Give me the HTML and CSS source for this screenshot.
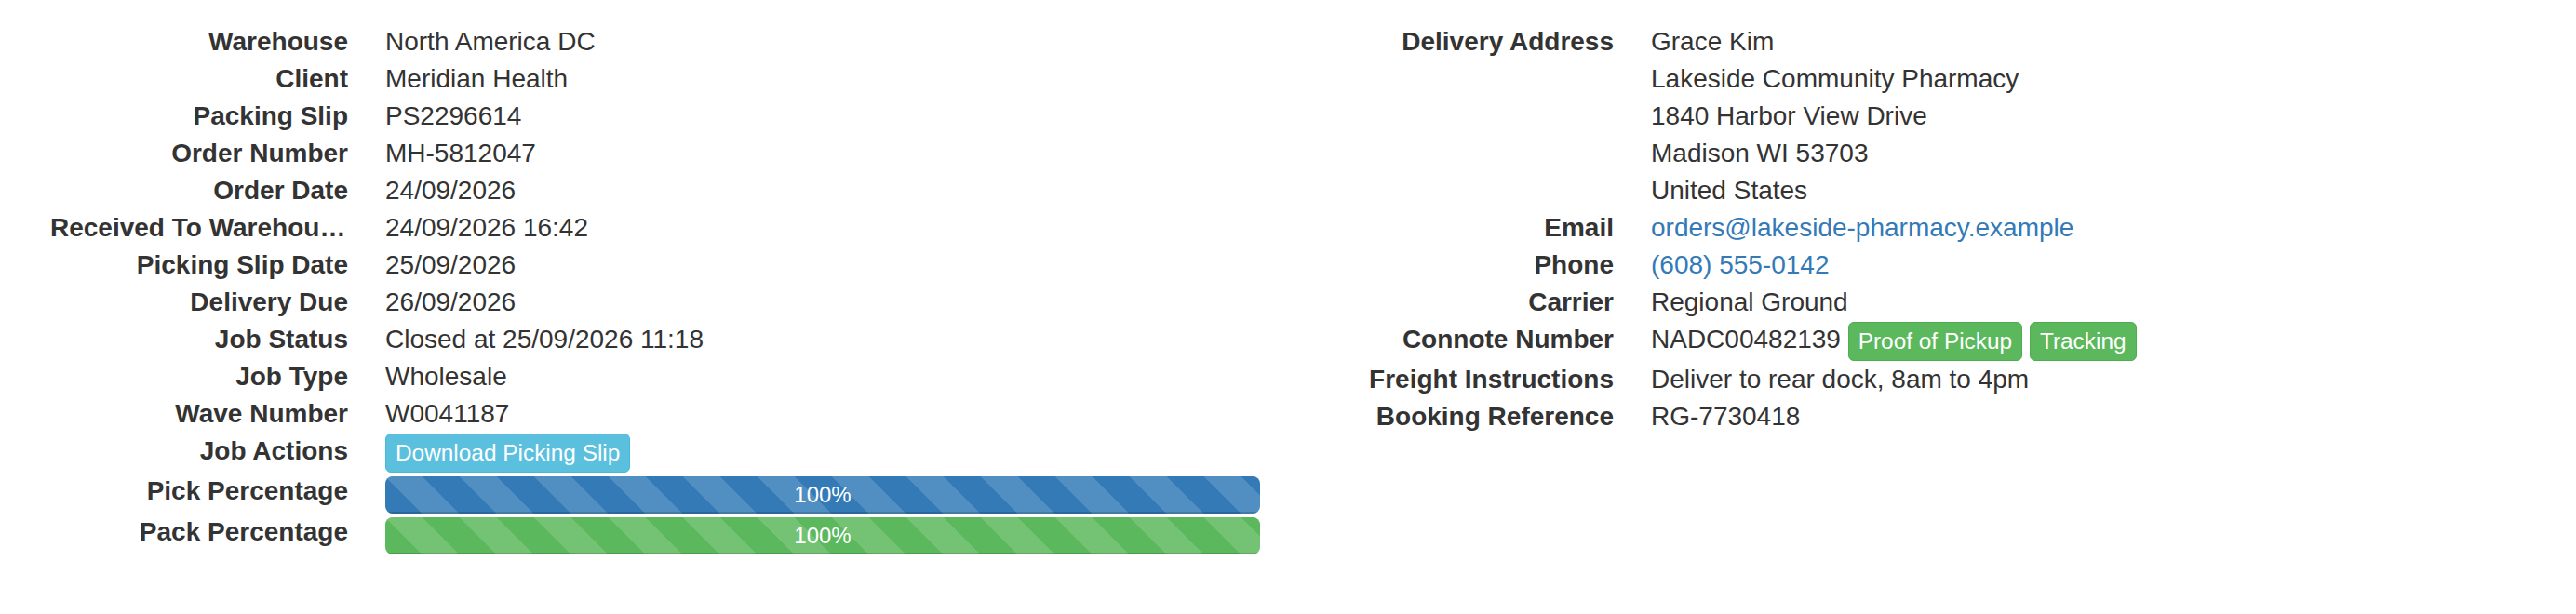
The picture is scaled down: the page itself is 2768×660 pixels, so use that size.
FILE: index.html
```html
<!DOCTYPE html>
<html lang="en">
<head>
<meta charset="utf-8">
<title>Job Details</title>
<link rel="stylesheet" href="styles.css">
</head>
<body>
<div class="page">
  <div class="col">
    <dl class="details">
      <dt>Warehouse</dt><dd>North America DC</dd>
      <dt>Client</dt><dd>Meridian Health</dd>
      <dt>Packing Slip</dt><dd>PS2296614</dd>
      <dt>Order Number</dt><dd>MH-5812047</dd>
      <dt>Order Date</dt><dd>24/09/2026</dd>
      <dt>Received To Warehouse Date</dt><dd>24/09/2026 16:42</dd>
      <dt>Picking Slip Date</dt><dd>25/09/2026</dd>
      <dt>Delivery Due</dt><dd>26/09/2026</dd>
      <dt>Job Status</dt><dd>Closed at 25/09/2026 11:18</dd>
      <dt>Job Type</dt><dd>Wholesale</dd>
      <dt>Wave Number</dt><dd>W0041187</dd>
      <dt>Job Actions</dt><dd><a class="btn btn-info" href="#">Download Picking Slip</a></dd>
      <dt>Pick Percentage</dt><dd><div class="progress"><div class="progress-bar bar-primary striped" style="width:100%">100%</div></div></dd>
      <dt>Pack Percentage</dt><dd><div class="progress"><div class="progress-bar bar-success striped" style="width:100%">100%</div></div></dd>
    </dl>
  </div>
  <div class="col">
    <dl class="details">
      <dt>Delivery Address</dt><dd>Grace Kim<br>Lakeside Community Pharmacy<br>1840 Harbor View Drive<br>Madison WI 53703<br>United States</dd>
      <dt>Email</dt><dd><a class="link" href="#">orders@lakeside-pharmacy.example</a></dd>
      <dt>Phone</dt><dd><a class="link" href="#">(608) 555-0142</a></dd>
      <dt>Carrier</dt><dd>Regional Ground</dd>
      <dt>Connote Number</dt><dd>NADC00482139 <a class="btn btn-success" href="#">Proof of Pickup</a> <a class="btn btn-success" href="#">Tracking</a></dd>
      <dt>Freight Instructions</dt><dd>Deliver to rear dock, 8am to 4pm</dd>
      <dt>Booking Reference</dt><dd>RG-7730418</dd>
    </dl>
  </div>
</div>
</body>
</html>
```

FILE: styles.css
```css
* { box-sizing: border-box; }
body {
  margin: 0;
  background: #fff;
  color: #333;
  font-family: "Liberation Sans", Arial, sans-serif;
  font-size: 28px;
  line-height: 40px;
}
.page {
  display: flex;
  padding: 25px 24px 0;
}
.col {
  flex: 1 1 0;
  min-width: 0;
  padding: 0 30px;
}
.details {
  display: grid;
  grid-template-columns: 320px minmax(0, 1fr);
  column-gap: 40px;
  margin: 0;
}
.details dt {
  font-weight: bold;
  text-align: right;
  white-space: nowrap;
  overflow: hidden;
  text-overflow: ellipsis;
}
.details dd {
  margin: 0;
}
.link {
  color: #337ab7;
  text-decoration: none;
}
.btn {
  display: inline-block;
  vertical-align: middle;
  padding: 2px 10px;
  font-size: 24.4px;
  line-height: 36px;
  border: 1px solid transparent;
  border-radius: 6px;
  color: #fff;
  text-decoration: none;
  white-space: nowrap;
}
.btn-info {
  background-color: #5bc0de;
  border-color: #46b8da;
}
.btn-success {
  background-color: #5cb85c;
  border-color: #4cae4c;
}
.progress {
  height: 40px;
  margin-top: 4px;
  overflow: hidden;
  background-color: #f5f5f5;
  border-radius: 8px;
  box-shadow: inset 0 2px 4px rgba(0, 0, 0, 0.1);
}
.progress-bar {
  height: 100%;
  font-size: 24px;
  line-height: 40px;
  color: #fff;
  text-align: center;
  box-shadow: inset 0 -2px 0 rgba(0, 0, 0, 0.15);
}
.bar-primary { background-color: #337ab7; }
.bar-success { background-color: #5cb85c; }
.striped {
  background-image: linear-gradient(45deg, rgba(255, 255, 255, 0.15) 25%, transparent 25%, transparent 50%, rgba(255, 255, 255, 0.15) 50%, rgba(255, 255, 255, 0.15) 75%, transparent 75%, transparent);
  background-size: 80px 80px;
}
```
